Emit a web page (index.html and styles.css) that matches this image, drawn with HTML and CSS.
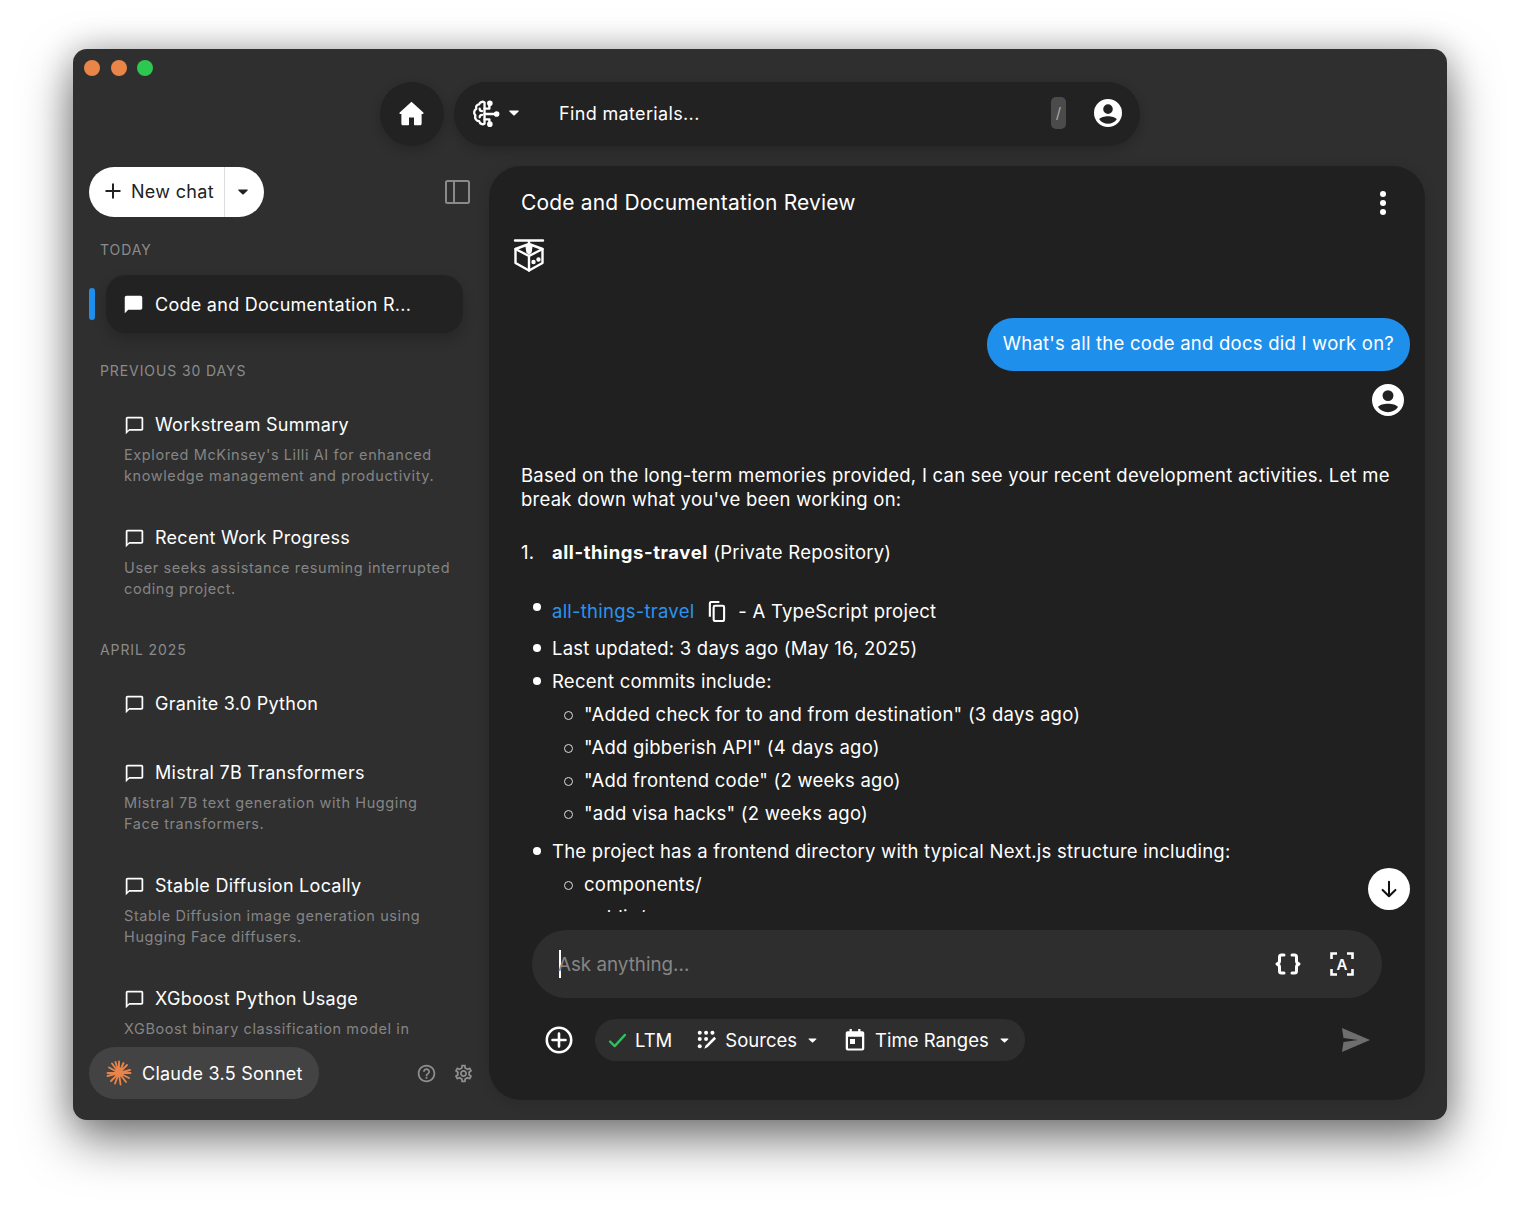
FILE: index.html
```html
<!DOCTYPE html>
<html lang="en">
<head>
    <meta charset="UTF-8">
    <title>Code and Documentation Review</title>
    <link rel="stylesheet" href="styles.css">
</head>
<body>

<svg class="sprite" xmlns="http://www.w3.org/2000/svg">
    <symbol id="i-chat" viewBox="0 0 24 24"><path d="M20 2H4c-1.100 0-2 .9-2 2v18l4-4h14c1.100 0 2-.9 2-2V4c0-1.100-.9-2-2-2z"/></symbol>
    <symbol id="i-chat-o" viewBox="0 0 24 24"><path d="M20 2H4c-1.100 0-2 .9-2 2v18l4-4h14c1.100 0 2-.9 2-2V4c0-1.100-.9-2-2-2zm0 14H6l-2 2V4h16v12z"/></symbol>
    <symbol id="i-user" viewBox="0 0 24 24"><path fill-rule="evenodd" d="M12 0a12 12 0 1 0 0 24 12 12 0 0 0 0-24zm0 4.600a4.100 4.100 0 1 1 0 8.200 4.100 4.100 0 0 1 0-8.200zm0 16.600c-3.100 0-5.900-1.500-7.500-3.900.9-1.600 4.600-2.500 7.500-2.500s6.600.9 7.500 2.500c-1.600 2.400-4.400 3.900-7.500 3.900z"/></symbol>
    <symbol id="i-caret" viewBox="0 0 10 6"><path d="M0.800 0.500h8.400c.5 0 .7.5.4.9L5.400 5.400c-.2.2-.6.2-.8 0L.4 1.400C.1 1 .3.500.8.500z"/></symbol>
</svg>

<div class="window">
    <div class="traffic">
        <span class="dot orange"></span>
        <span class="dot orange"></span>
        <span class="dot green"></span>
    </div>

    <div class="topbar">
        <button class="home-btn">
            <svg class="home-icon" viewBox="0 0 24 24"><path d="M12 1.500 1.500 11.200c-.5.5-.2 1.300.5 1.300H3v8.300c0 1 .7 1.700 1.700 1.700h4.100c.6 0 1-.4 1-1v-6h4.400v6c0 .6.4 1 1 1h4.100c1 0 1.700-.7 1.700-1.700v-8.300h1c.7 0 1-.8.5-1.300z"/></svg>
        </button>
        <div class="search">
            <svg class="brain-icon" viewBox="0 0 30 30" fill="none" stroke="#fff" stroke-width="2.400" stroke-linecap="round" stroke-linejoin="round">
                <path d="M14 3.500c-2.500-1.500-5 0-5.500 2C6 5.500 4.500 8 5.500 10 3 11.500 2.500 15 4.500 17 3.500 20 5.500 23 8.500 23c.5 2.500 3.500 4 5.500 2.500V3.500z"/>
                <path d="M14 10h5M14 15.500h12M14 21h5M19 10V6.500M19 21v3.500M9 10c0 2 1.500 2.500 2.500 2.500M9 19c0-2 1.500-2.500 2.500-2.500"/>
                <circle cx="19.500" cy="4.500" r="1.700" fill="#fff"/><circle cx="26.500" cy="15.500" r="1.700" fill="#fff"/><circle cx="19.500" cy="26" r="1.700" fill="#fff"/>
            </svg>
            <svg class="caret caret-white"><use href="#i-caret"/></svg>
            <span class="search-text">Find materials...</span>
            <span class="slash-key">/</span>
            <svg class="user-icon"><use href="#i-user"/></svg>
        </div>
    </div>

    <div class="content">
        <aside class="sidebar">
            <div class="side-top">
                <div class="new-chat">
                    <span class="new-chat-main">
                        <svg class="plus-icon" viewBox="0 0 20 20" stroke="#222" stroke-width="2.200" stroke-linecap="round"><path d="M10 2.500v15M2.500 10h15"/></svg>
                        New chat
                    </span>
                    <span class="new-chat-drop"><svg class="caret caret-dark"><use href="#i-caret"/></svg></span>
                </div>
                <svg class="panel-icon" viewBox="0 0 25 24" fill="none" stroke="#8a8a8a" stroke-width="2"><rect x="1" y="1" width="23" height="22" rx="1.500"/><path d="M9 1v22"/></svg>
            </div>

            <div class="chat-list">
                <div class="group-label first">TODAY</div>
                <div class="active-row">
                    <span class="active-bar"></span>
                    <div class="chat-active">
                        <svg class="chat-icon"><use href="#i-chat"/></svg>
                        <span>Code and Documentation R...</span>
                    </div>
                </div>

                <div class="group-label">PREVIOUS 30 DAYS</div>
                <div class="chat-item">
                    <div class="chat-title"><svg class="chat-icon"><use href="#i-chat-o"/></svg>Workstream Summary</div>
                    <p class="chat-desc">Explored McKinsey's Lilli AI for enhanced knowledge management and productivity.</p>
                </div>
                <div class="chat-item">
                    <div class="chat-title"><svg class="chat-icon"><use href="#i-chat-o"/></svg>Recent Work Progress</div>
                    <p class="chat-desc">User seeks assistance resuming interrupted coding project.</p>
                </div>

                <div class="group-label april">APRIL 2025</div>
                <div class="chat-item single">
                    <div class="chat-title"><svg class="chat-icon"><use href="#i-chat-o"/></svg>Granite 3.0 Python</div>
                </div>
                <div class="chat-item">
                    <div class="chat-title"><svg class="chat-icon"><use href="#i-chat-o"/></svg>Mistral 7B Transformers</div>
                    <p class="chat-desc">Mistral 7B text generation with Hugging Face transformers.</p>
                </div>
                <div class="chat-item">
                    <div class="chat-title"><svg class="chat-icon"><use href="#i-chat-o"/></svg>Stable Diffusion Locally</div>
                    <p class="chat-desc">Stable Diffusion image generation using Hugging Face diffusers.</p>
                </div>
                <div class="chat-item">
                    <div class="chat-title"><svg class="chat-icon"><use href="#i-chat-o"/></svg>XGboost Python Usage</div>
                    <p class="chat-desc">XGBoost binary classification model in Python.</p>
                </div>
            </div>

            <div class="side-bottom">
                <div class="model-pill">
                    <svg class="claude-icon" viewBox="0 0 26 26" stroke="#e8834a" stroke-width="1.900" stroke-linecap="round">
                        <path d="M13 13V1.500M13 13l4.500-10M13 13l8-8M13 13l11-3M13 13h11.500M13 13l10 5M13 13l7 9M13 13l1.500 11.500M13 13l-4 10.500M13 13l-8 8M13 13L1.500 16M13 13H1.500M13 13L3 7.500M13 13L6 3.500M13 13L9.500 2"/>
                    </svg>
                    <span>Claude 3.5 Sonnet</span>
                </div>
                <svg class="help-icon" viewBox="0 0 24 24" fill="#8f8f8f"><path d="M11 18h2v-2h-2v2zm1-16C6.480 2 2 6.480 2 12s4.480 10 10 10 10-4.480 10-10S17.520 2 12 2zm0 18c-4.410 0-8-3.590-8-8s3.590-8 8-8 8 3.590 8 8-3.590 8-8 8zm0-14c-2.210 0-4 1.790-4 4h2c0-1.100.9-2 2-2s2 .9 2 2c0 2-3 1.750-3 5h2c0-2.250 3-2.500 3-5 0-2.210-1.790-4-4-4z"/></svg>
                <svg class="gear-icon" viewBox="0 0 24 24" fill="#8f8f8f"><path d="M19.430 12.980c.04-.32.07-.64.07-.98 0-.34-.03-.66-.07-.98l2.110-1.650c.19-.15.24-.42.12-.64l-2-3.460c-.09-.16-.26-.25-.44-.25-.06 0-.12.01-.17.03l-2.490 1c-.52-.4-1.080-.73-1.690-.98l-.38-2.650C14.460 2.180 14.250 2 14 2h-4c-.25 0-.46.18-.49.42l-.38 2.650c-.61.25-1.170.59-1.690.98l-2.490-1c-.06-.02-.12-.03-.18-.03-.17 0-.34.09-.43.25l-2 3.460c-.13.22-.07.49.12.64l2.110 1.650c-.04.32-.07.65-.07.98 0 .33.03.66.07.98l-2.110 1.650c-.19.15-.24.42-.12.64l2 3.460c.09.16.26.25.44.25.06 0 .12-.01.17-.03l2.490-1c.52.4 1.080.73 1.690.98l.38 2.650c.03.24.24.42.49.42h4c.25 0 .46-.18.49-.42l.38-2.650c.61-.25 1.170-.59 1.690-.98l2.490 1c.06.02.12.03.18.03.17 0 .34-.09.43-.25l2-3.460c.12-.22.07-.49-.12-.64l-2.110-1.650zm-1.980-1.710c.04.31.05.52.05.73 0 .21-.02.43-.05.73l-.14 1.130.89.7 1.080.84-.7 1.210-1.270-.51-1.040-.42-.9.68c-.43.32-.84.56-1.250.73l-1.060.43-.16 1.130-.2 1.350h-1.400l-.19-1.350-.16-1.130-1.060-.43c-.43-.18-.83-.41-1.230-.71l-.91-.7-1.060.43-1.270.51-.7-1.210 1.080-.84.89-.7-.14-1.130c-.03-.31-.05-.54-.05-.74s.02-.43.05-.73l.14-1.130-.89-.7-1.080-.84.7-1.210 1.270.51 1.040.42.9-.68c.43-.32.84-.56 1.250-.73l1.060-.43.16-1.130.2-1.350h1.390l.19 1.350.16 1.130 1.060.43c.43.18.83.41 1.230.71l.91.7 1.060-.43 1.270-.51.7 1.210-1.070.85-.89.7.14 1.130zM12 8c-2.210 0-4 1.790-4 4s1.790 4 4 4 4-1.790 4-4-1.790-4-4-4zm0 6c-1.100 0-2-.9-2-2s.9-2 2-2 2 .9 2 2-.9 2-2 2z"/></svg>
            </div>
        </aside>

        <main class="panel">
            <div class="panel-head">
                <h1 class="panel-title">Code and Documentation Review</h1>
                <span class="kebab"><i></i><i></i><i></i></span>
            </div>

            <div class="messages">
                <svg class="bot-icon" viewBox="0 0 32 34" fill="none" stroke="#fff" stroke-width="2.400" stroke-linejoin="round" stroke-linecap="round">
                    <path d="M2 2.500h28M16 2.500v3"/>
                    <path d="M16 6 2.500 11v14L16 32.500 29.500 25V11z"/>
                    <path d="M2.500 11 16 18l13.500-7M16 18v14.500"/>
                    <path d="M13.500 7.500h5l-1 6.500-1.500 1.500-1.500-1.500z" fill="#fff"/>
                    <circle cx="20.500" cy="24" r="1" fill="#fff"/><circle cx="25.500" cy="21.500" r="1" fill="#fff"/>
                </svg>

                <div class="bubble-row"><div class="bubble">What's all the code and docs did I work on?</div></div>
                <div class="avatar-row"><svg class="avatar"><use href="#i-user"/></svg></div>

                <div class="answer">
                    <p class="intro">Based on the long-term memories provided, I can see your recent development activities. Let me break down what you've been working on:</p>
                    <div class="numbered"><span class="num">1.</span><span><b>all-things-travel</b> (Private Repository)</span></div>
                    <ul class="bullets">
                        <li class="repo-item">
                            <a class="repo-link">all-things-travel</a>
                            <svg class="copy-icon" viewBox="0 0 20 22" fill="none" stroke="#fff" stroke-width="2.200"><path d="M3 16.500V2.500c0-.8.6-1.500 1.500-1.500H13"/><rect x="7" y="5" width="11" height="16" rx="1.500"/></svg>
                            <span>- A TypeScript project</span>
                        </li>
                        <li>Last updated: 3 days ago (May 16, 2025)</li>
                        <li>Recent commits include:
                            <ul>
                                <li>"Added check for to and from destination" (3 days ago)</li>
                                <li>"Add gibberish API" (4 days ago)</li>
                                <li>"Add frontend code" (2 weeks ago)</li>
                                <li>"add visa hacks" (2 weeks ago)</li>
                            </ul>
                        </li>
                        <li>The project has a frontend directory with typical Next.js structure including:
                            <ul>
                                <li>components/</li>
                                <li>public/</li>
                            </ul>
                        </li>
                    </ul>
                </div>
            </div>

            <button class="scroll-down">
                <svg viewBox="0 0 24 24" fill="none" stroke="#111" stroke-width="2.200" stroke-linecap="round" stroke-linejoin="round"><path d="M12 4v16M5 13l7 7 7-7"/></svg>
            </button>

            <div class="composer">
                <div class="ask-box">
                    <span class="cursor"></span>
                    <span class="ask-text">Ask anything...</span>
                    <svg class="ask-icon braces" viewBox="0 0 26 22" fill="none" stroke="#fff" stroke-width="3" stroke-linecap="round" stroke-linejoin="round"><path d="M9 2H6.500C5.200 2 4.500 2.800 4.500 4v4c0 1.500-1 2.500-2.500 3 1.500.5 2.500 1.500 2.500 3v4c0 1.200.7 2 2 2H9M17 2h2.500c1.300 0 2 .8 2 2v4c0 1.500 1 2.500 2.500 3-1.500.5-2.500 1.500-2.500 3v4c0 1.200-.7 2-2 2H17"/></svg>
                    <svg class="ask-icon scan" viewBox="0 0 24 24" fill="none" stroke="#fff" stroke-width="2.600"><path d="M1.500 7V1.500H7M17 1.500h5.500V7M22.500 17v5.500H17M7 22.500H1.500V17"/><text x="12" y="17.500" text-anchor="middle" font-family="Inter" font-size="15" font-weight="600" fill="#fff" stroke="none">A</text></svg>
                </div>
                <div class="tools">
                    <svg class="add-icon" viewBox="0 0 28 28" fill="none" stroke="#fff" stroke-width="2.600" stroke-linecap="round"><circle cx="14" cy="14" r="12.200"/><path d="M14 7.500v13M7.500 14h13"/></svg>
                    <div class="tool-pill">
                        <span class="tool ltm">
                            <svg class="check-icon" viewBox="0 0 20 16" fill="none" stroke="#2fc35a" stroke-width="2.400" stroke-linecap="round" stroke-linejoin="round"><path d="M2 9l5 5L18 2"/></svg>
                            LTM
                        </span>
                        <span class="tool sources">
                            <svg class="sources-icon" viewBox="0 0 22 22" fill="#fff"><circle cx="3" cy="3" r="2.200"/><circle cx="10" cy="3" r="2.200"/><circle cx="17" cy="3" r="2.200"/><circle cx="3" cy="10" r="2.200"/><circle cx="10" cy="10" r="2.200"/><circle cx="3" cy="18" r="2.200"/><path d="M19 7.500l2 2L11.500 19l-3.500 1.500L9.500 17z"/></svg>
                            Sources
                            <svg class="caret caret-white small"><use href="#i-caret"/></svg>
                        </span>
                        <span class="tool ranges">
                            <svg class="calendar-icon" viewBox="0 0 22 24" fill="#fff"><path fill-rule="evenodd" d="M5 0h2.500v2.500h7V0H17v2.500h2c1.200 0 2.200 1 2.200 2.200v16.600c0 1.200-1 2.200-2.200 2.200H3c-1.200 0-2.200-1-2.200-2.200V4.700c0-1.200 1-2.200 2.200-2.200h2zM3.300 8.500v12.800h15.400V8.500zM5.500 11h5.500v5.500H5.500z"/></svg>
                            Time Ranges
                            <svg class="caret caret-white small"><use href="#i-caret"/></svg>
                        </span>
                    </div>
                    <svg class="send-icon" viewBox="0 0 30 26"><path fill="#6e6e6e" d="M1 1l28 12L1 25l1.500-10L17 13 2.500 11z"/></svg>
                </div>
            </div>
        </main>
    </div>
</div>

</body>
</html>
```

FILE: styles.css
```css
* {
    box-sizing: border-box;
}

body {
    font-family: 'Inter', 'Liberation Sans', sans-serif;
    background-color: #fff;
    color: #fff;
    margin: 0;
    height: 1218px;
    overflow: hidden;
}

.sprite {
    display: none;
}

.window {
    width: 1374px;
    height: 1071px;
    margin: 49px 0 0 73px;
    background-color: #2f2f2f;
    border-radius: 14px;
    box-shadow: 0 20px 50px rgba(0, 0, 0, 0.5), 0 0 32px rgba(0, 0, 0, 0.22);
    display: flex;
    flex-direction: column;
    overflow: hidden;
}

.traffic {
    display: flex;
    gap: 10.5px;
    padding: 11px 0 0 11px;
    height: 33px;
}

.dot {
    width: 16px;
    height: 16px;
    border-radius: 50%;
}

.orange {
    background-color: #ea8549;
}

.green {
    background-color: #2cc84f;
}

/* top search row */
.topbar {
    display: flex;
    gap: 10px;
    padding-left: 307px;
    height: 84px;
}

.home-btn {
    width: 64px;
    height: 64px;
    border: none;
    border-radius: 50%;
    background-color: #222;
    box-shadow: 0 4px 12px rgba(0, 0, 0, 0.2);
    display: flex;
    align-items: center;
    justify-content: center;
    padding: 0 2px 2px 0;
}

.home-icon {
    width: 27px;
    height: 27px;
    fill: #fff;
}

.search {
    width: 686px;
    height: 64px;
    border-radius: 32px;
    background-color: #222;
    box-shadow: 0 4px 12px rgba(0, 0, 0, 0.2);
    display: flex;
    align-items: center;
    padding: 0 18px 2px 17px;
}

.brain-icon {
    width: 29px;
    height: 29px;
}

.caret {
    width: 10px;
    height: 6px;
}

.caret-white {
    fill: #fff;
    margin-left: 9px;
}

.caret-dark {
    fill: #222;
}

.search-text {
    font-size: 18px;
    letter-spacing: 0.35px;
    margin-left: 40px;
    flex: 1;
}

.slash-key {
    width: 15px;
    height: 32px;
    border-radius: 5px;
    background-color: #4b4b4b;
    color: #aaa;
    font-size: 15px;
    line-height: 32px;
    text-align: center;
}

.user-icon {
    width: 28px;
    height: 28px;
    fill: #fff;
    margin-left: 28px;
}

.content {
    flex: 1;
    display: flex;
    min-height: 0;
}

/* sidebar */
.sidebar {
    width: 416px;
    display: flex;
    flex-direction: column;
    min-height: 0;
}

.side-top {
    display: flex;
    align-items: center;
    justify-content: space-between;
    padding: 0 19px 0 16px;
    margin-top: 1px;
    height: 50px;
}

.new-chat {
    width: 175px;
    height: 50px;
    border-radius: 25px;
    background-color: #fff;
    color: #222;
    display: flex;
    font-size: 18px;
    letter-spacing: 0.3px;
}

.new-chat-main {
    width: 136px;
    display: flex;
    align-items: center;
    gap: 9px;
    padding: 0 0 2px 15px;
    border-right: 1px solid #ddd;
}

.plus-icon {
    width: 18px;
    height: 18px;
}

.new-chat-drop {
    flex: 1;
    display: flex;
    align-items: center;
    justify-content: center;
    padding-right: 3px;
}

.panel-icon {
    width: 25px;
    height: 24px;
}

.chat-list {
    flex: 1;
    min-height: 0;
    overflow: hidden;
}

.group-label {
    font-size: 14px;
    letter-spacing: 0.9px;
    color: #8b8b8b;
    line-height: 18px;
    padding-left: 27px;
    margin-top: 29px;
}

.group-label.first {
    margin-top: 24px;
}

.group-label.april {
    margin-top: 33px;
}

.active-row {
    display: flex;
    align-items: center;
    padding-left: 16px;
    margin-top: 16px;
}

.active-bar {
    width: 6px;
    height: 32px;
    border-radius: 3px;
    background-color: #1f8fec;
    margin-right: 11px;
}

.chat-active {
    width: 357px;
    height: 58px;
    border-radius: 20px;
    background-color: #222;
    box-shadow: 0 6px 14px rgba(0, 0, 0, 0.2);
    display: flex;
    align-items: center;
    gap: 11px;
    padding-left: 17px;
    font-size: 18px;
    letter-spacing: 0.27px;
}

.chat-icon {
    width: 21px;
    height: 21px;
    fill: #fff;
    flex: none;
}

.chat-item {
    padding: 0 35px 0 51px;
    margin-top: 30px;
    height: 83px;
}

.group-label + .chat-item {
    margin-top: 32px;
}

.chat-item.single {
    height: 39px;
}

.chat-title {
    display: flex;
    align-items: center;
    gap: 10px;
    font-size: 18px;
    line-height: 26px;
    letter-spacing: 0.27px;
}

.chat-desc {
    margin: 6px 0 0;
    font-size: 14.5px;
    line-height: 21px;
    letter-spacing: 0.6px;
    color: #858585;
}

.side-bottom {
    display: flex;
    align-items: center;
    padding: 7px 0 21px 16px;
}

.model-pill {
    width: 230px;
    height: 52px;
    border-radius: 26px;
    background-color: #434343;
    display: flex;
    align-items: center;
    gap: 10px;
    padding-left: 17px;
    font-size: 18px;
    letter-spacing: 0.25px;
    margin-right: 97px;
}

.claude-icon {
    width: 26px;
    height: 26px;
}

.help-icon,
.gear-icon {
    width: 21px;
    height: 21px;
}

.gear-icon {
    margin-left: 16px;
}

/* main panel */
.panel {
    position: relative;
    width: 936px;
    height: 934px;
    border-radius: 32px;
    background-color: #202020;
    box-shadow: 0 2px 14px rgba(0, 0, 0, 0.12);
    display: flex;
    flex-direction: column;
}

.panel-head {
    height: 66px;
    display: flex;
    justify-content: space-between;
    padding: 24px 39px 0 32px;
}

.panel-title {
    margin: 0;
    font-size: 21px;
    font-weight: 400;
    line-height: 26px;
    letter-spacing: 0.17px;
}

.kebab {
    display: flex;
    flex-direction: column;
    gap: 3px;
    padding-top: 1px;
}

.kebab i {
    width: 6px;
    height: 6px;
    border-radius: 50%;
    background-color: #fff;
}

.messages {
    flex: 1;
    min-height: 0;
    overflow: hidden;
    font-size: 18.5px;
    line-height: 24px;
    letter-spacing: 0.24px;
}

.bot-icon {
    display: block;
    width: 32px;
    height: 34px;
    margin: 6px 0 0 24px;
}

.bubble-row {
    display: flex;
    justify-content: flex-end;
    padding-right: 15px;
    margin-top: 46px;
}

.bubble {
    height: 53px;
    border-radius: 26px;
    background-color: #1f8fec;
    padding: 0 16px;
    line-height: 50px;
}

.avatar-row {
    display: flex;
    justify-content: flex-end;
    padding-right: 21px;
    margin-top: 13px;
    height: 32px;
}

.avatar {
    width: 32px;
    height: 32px;
    fill: #fff;
}

.answer {
    padding: 47px 32px 0;
}

.intro {
    margin: 0;
}

.numbered {
    display: flex;
    margin-top: 29px;
}

.num {
    width: 31px;
}

.numbered b {
    font-weight: 700;
    letter-spacing: 0.56px;
}

.bullets {
    margin: 35px 0 0;
    padding-left: 31px;
    list-style: none;
}

.bullets li {
    position: relative;
    margin-bottom: 9px;
}

.bullets li::before {
    content: "";
    position: absolute;
    left: -19px;
    top: 8px;
    width: 8px;
    height: 8px;
    border-radius: 50%;
    background-color: #fff;
}

.bullets .repo-item {
    margin-bottom: 13px;
}

.bullets .repo-item::before {
    top: 4px;
}

.bullets ul {
    margin: 9px 0 14px;
    padding-left: 32px;
    list-style: none;
}

.bullets ul li::before {
    left: -20px;
    top: 9px;
    width: 7px;
    height: 7px;
    background-color: transparent;
    border: 1.5px solid #ddd;
}

.repo-link {
    color: #2b93ee;
}

.copy-icon {
    width: 19px;
    height: 21px;
    margin: 0 7px;
    vertical-align: -4px;
}

.scroll-down {
    position: absolute;
    right: 15px;
    top: 702px;
    width: 42px;
    height: 42px;
    border: none;
    border-radius: 50%;
    background-color: #fff;
    padding: 10px;
}

.composer {
    margin-top: 18px;
    height: 170px;
    padding: 0 43px;
}

.ask-box {
    height: 68px;
    border-radius: 34px;
    background-color: #2e2e2e;
    display: flex;
    align-items: center;
    padding: 0 27px;
    font-size: 18.8px;
    color: #868686;
}

.cursor {
    width: 2px;
    height: 28px;
    background-color: #fff;
}

.ask-text {
    flex: 1;
    margin-left: -3px;
}

.ask-icon {
    width: 26px;
    height: 24px;
}

.braces {
    margin-right: 28px;
}

.tools {
    display: flex;
    align-items: center;
    margin-top: 21px;
    padding-left: 13px;
}

.add-icon {
    width: 28px;
    height: 28px;
}

.tool-pill {
    width: 430px;
    height: 42px;
    border-radius: 21px;
    background-color: #2e2e2e;
    margin-left: 22px;
    display: flex;
    align-items: center;
    padding-left: 13px;
    font-size: 18.5px;
}

.tool {
    display: flex;
    align-items: center;
}

.check-icon {
    width: 19px;
    height: 15px;
    margin-right: 8px;
}

.sources {
    margin-left: 25px;
}

.sources-icon {
    width: 20px;
    height: 20px;
    margin-right: 8px;
}

.ranges {
    margin-left: 28px;
}

.calendar-icon {
    width: 20px;
    height: 22px;
    margin-right: 10px;
}

.caret.small {
    width: 9px;
    height: 5px;
    margin-left: 11px;
}

.send-icon {
    width: 30px;
    height: 26px;
    margin-left: auto;
    margin-right: 11px;
}
```
